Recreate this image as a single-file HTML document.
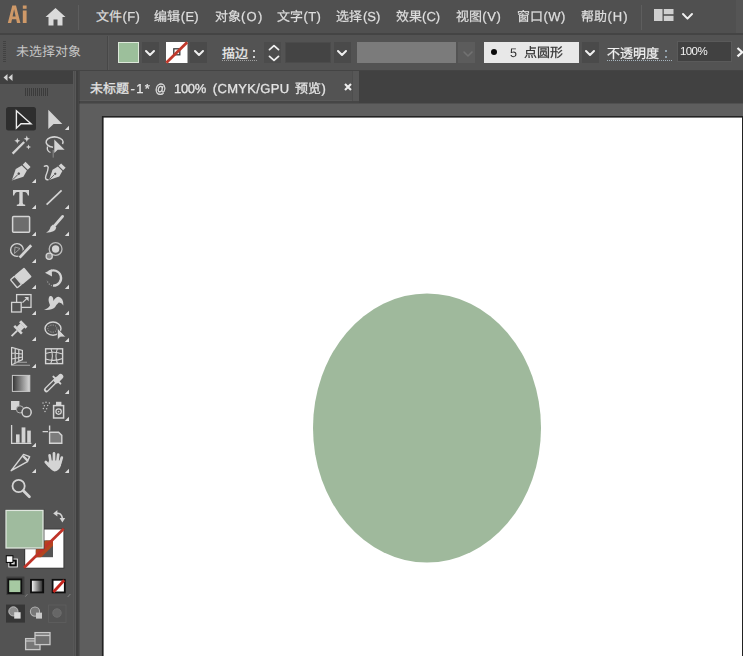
<!DOCTYPE html>
<html lang="zh-CN"><head><meta charset="utf-8"><title>Adobe Illustrator</title><style>
html,body{margin:0;padding:0}
body{width:743px;height:656px;overflow:hidden;position:relative;background:#535353;font-family:"Liberation Sans",sans-serif}
.abs{position:absolute}
.g{position:absolute;display:block;overflow:visible}
.tx{pointer-events:none;will-change:transform}
.tx text{font-family:"Liberation Sans",sans-serif;white-space:pre;text-rendering:geometricPrecision}
.cj text{font-family:"Liberation Sans","Noto Sans CJK SC",sans-serif;white-space:pre;text-rendering:geometricPrecision}
</style></head><body>
<div class="abs" style="left:0;top:0;width:743px;height:33px;background:#505050"></div>
<div class="abs" style="left:0;top:33px;width:743px;height:2px;background:#444444"></div>
<div class="abs" style="left:736px;top:0;width:7px;height:33px;background:#555555"></div>
<svg class="g" style="left:0;top:0" width="32" height="30" viewBox="0 0 32 30" role="img" aria-label="Ai"><title>Ai</title><path fill="#cf9968" fill-rule="evenodd" d="M7.8 23 L12.3 5.4 H16 L20.4 23 H17 L16.2 19.3 H12 L11.2 23 Z M12.6 16.5 H15.6 L14.1 9.3 Z M22.8 10.4 H26.6 V23 H22.8 Z M22.8 5.4 H26.6 V8.7 H22.8 Z"/></svg>
<svg class="g" style="left:45px;top:7px" width="22" height="20" viewBox="0 0 22 20"><path fill="#dadada" d="M10.5 1 L0.5 10 H3.5 V18.5 H8.5 V12.5 H12.5 V18.5 H17.5 V10 H20.5 Z"/></svg>
<div class="abs" style="left:78px;top:5px;width:1px;height:25px;background:#5e5e5e"></div>
<svg class="g cj" style="left:96px;top:6.95px" width="28.0" height="18.2" viewBox="0 -13.65 28.0 18.2"><text x="0" y="0" font-size="13" fill="#dedede" style="stroke:#dedede;stroke-width:0.25px">文件</text></svg>
<svg class="g tx" style="left:0;top:0" width="743" height="110"><text x="122.5" y="20.6" font-size="13" fill="#dedede" style="letter-spacing:0.35px;stroke:#dedede;stroke-width:0.25px">(F)</text></svg>
<svg class="g cj" style="left:154.3px;top:6.95px" width="28.0" height="18.2" viewBox="0 -13.65 28.0 18.2"><text x="0" y="0" font-size="13" fill="#dedede" style="stroke:#dedede;stroke-width:0.25px">编辑</text></svg>
<svg class="g tx" style="left:0;top:0" width="743" height="110"><text x="180.8" y="20.6" font-size="13" fill="#dedede" style="letter-spacing:0.25px;stroke:#dedede;stroke-width:0.25px">(E)</text></svg>
<svg class="g cj" style="left:214.6px;top:6.95px" width="28.0" height="18.2" viewBox="0 -13.65 28.0 18.2"><text x="0" y="0" font-size="13" fill="#dedede" style="stroke:#dedede;stroke-width:0.25px">对象</text></svg>
<svg class="g tx" style="left:0;top:0" width="743" height="110"><text x="241.1" y="20.6" font-size="13" fill="#dedede" style="letter-spacing:1.2px;stroke:#dedede;stroke-width:0.25px">(O)</text></svg>
<svg class="g cj" style="left:277px;top:6.95px" width="28.0" height="18.2" viewBox="0 -13.65 28.0 18.2"><text x="0" y="0" font-size="13" fill="#dedede" style="stroke:#dedede;stroke-width:0.25px">文字</text></svg>
<svg class="g tx" style="left:0;top:0" width="743" height="110"><text x="303.5" y="20.6" font-size="13" fill="#dedede" style="letter-spacing:0.35px;stroke:#dedede;stroke-width:0.25px">(T)</text></svg>
<svg class="g cj" style="left:336.4px;top:6.95px" width="28.0" height="18.2" viewBox="0 -13.65 28.0 18.2"><text x="0" y="0" font-size="13" fill="#dedede" style="stroke:#dedede;stroke-width:0.25px">选择</text></svg>
<svg class="g tx" style="left:0;top:0" width="743" height="110"><text x="362.9" y="20.6" font-size="13" fill="#dedede" style="letter-spacing:0px;stroke:#dedede;stroke-width:0.25px">(S)</text></svg>
<svg class="g cj" style="left:395.6px;top:6.95px" width="28.0" height="18.2" viewBox="0 -13.65 28.0 18.2"><text x="0" y="0" font-size="13" fill="#dedede" style="stroke:#dedede;stroke-width:0.25px">效果</text></svg>
<svg class="g tx" style="left:0;top:0" width="743" height="110"><text x="422.1" y="20.6" font-size="13" fill="#dedede" style="letter-spacing:0px;stroke:#dedede;stroke-width:0.25px">(C)</text></svg>
<svg class="g cj" style="left:455.7px;top:6.95px" width="28.0" height="18.2" viewBox="0 -13.65 28.0 18.2"><text x="0" y="0" font-size="13" fill="#dedede" style="stroke:#dedede;stroke-width:0.25px">视图</text></svg>
<svg class="g tx" style="left:0;top:0" width="743" height="110"><text x="482.2" y="20.6" font-size="13" fill="#dedede" style="letter-spacing:0.65px;stroke:#dedede;stroke-width:0.25px">(V)</text></svg>
<svg class="g cj" style="left:517px;top:6.95px" width="28.0" height="18.2" viewBox="0 -13.65 28.0 18.2"><text x="0" y="0" font-size="13" fill="#dedede" style="stroke:#dedede;stroke-width:0.25px">窗口</text></svg>
<svg class="g tx" style="left:0;top:0" width="743" height="110"><text x="543.5" y="20.6" font-size="13" fill="#dedede" style="letter-spacing:0.4px;stroke:#dedede;stroke-width:0.25px">(W)</text></svg>
<svg class="g cj" style="left:581px;top:6.95px" width="28.0" height="18.2" viewBox="0 -13.65 28.0 18.2"><text x="0" y="0" font-size="13" fill="#dedede" style="stroke:#dedede;stroke-width:0.25px">帮助</text></svg>
<svg class="g tx" style="left:0;top:0" width="743" height="110"><text x="607.5" y="20.6" font-size="13" fill="#dedede" style="letter-spacing:1.0px;stroke:#dedede;stroke-width:0.25px">(H)</text></svg>
<div class="abs" style="left:641px;top:5px;width:1px;height:25px;background:#5e5e5e"></div>
<svg class="g" style="left:654px;top:9px" width="20" height="12" viewBox="0 0 20 12"><g fill="#cfcfcf"><rect x="0" y="0" width="8.5" height="12"/><rect x="9.8" y="0" width="9.7" height="5.2"/><rect x="9.8" y="6.8" width="9.7" height="5.2"/></g></svg>
<svg class="g" style="left:682px;top:12.5px" width="11" height="6.6" viewBox="-1 -1 11 6.6"><path d="M0 0 L4.5 4.6 L9 0" fill="none" stroke="#efefef" stroke-width="2.0" stroke-linecap="round" stroke-linejoin="round"/></svg>
<div class="abs" style="left:0;top:35px;width:743px;height:35px;background:#535353"></div>
<div class="abs" style="left:0;top:70px;width:743px;height:1px;background:#444444"></div>
<div class="abs" style="left:107px;top:36px;width:1px;height:34px;background:#474747"></div><div class="abs" style="left:108px;top:36px;width:1px;height:34px;background:#5a5a5a"></div>
<div class="abs" style="left:3px;top:41px;width:3px;height:22px;background:repeating-linear-gradient(to bottom,#424242 0 1px,transparent 1px 2px)"></div>
<svg class="g cj" style="left:15.5px;top:42.35px" width="67.0" height="18.2" viewBox="0 -13.65 67.0 18.2"><text x="0" y="0" font-size="13" fill="#c6c6c6">未选择对象</text></svg>
<div class="abs" style="left:118px;top:42px;width:21px;height:21px;background:#9cbf9b;box-shadow:inset 0 0 0 1px #dde8da"></div>
<div class="abs" style="left:141.5px;top:42px;width:17px;height:21px;background:#4a4a4a"></div>
<svg class="g" style="left:145px;top:50.4px" width="10" height="6" viewBox="-1 -1 10 6"><path d="M0 0 L4.0 4 L8 0" fill="none" stroke="#efefef" stroke-width="2.0" stroke-linecap="round" stroke-linejoin="round"/></svg>
<svg class="g" style="left:166px;top:42px" width="21.5" height="21" viewBox="0 0 21.5 21"><rect width="21.5" height="21" fill="#fff"/><rect x="7.8" y="6.8" width="6" height="6" fill="none" stroke="#3a3a3a" stroke-width="1.3"/><path d="M0.3 20.7 L21.2 0.3" stroke="#c0392b" stroke-width="2.8"/></svg>
<div class="abs" style="left:190px;top:42px;width:17px;height:21px;background:#4a4a4a"></div>
<svg class="g" style="left:194px;top:50.4px" width="10" height="6" viewBox="-1 -1 10 6"><path d="M0 0 L4.0 4 L8 0" fill="none" stroke="#efefef" stroke-width="2.0" stroke-linecap="round" stroke-linejoin="round"/></svg>
<svg class="g cj" style="left:221.5px;top:43.85px" width="28.0" height="18.2" viewBox="0 -13.65 28.0 18.2"><text x="0" y="0" font-size="13" fill="#ececec" style="stroke:#ececec;stroke-width:0.25px">描边</text></svg>
<div class="abs" style="left:252.5px;top:50px;width:2px;height:2px;background:#d0d0d0"></div><div class="abs" style="left:252.5px;top:55.5px;width:2px;height:2px;background:#d0d0d0"></div>
<div class="abs" style="left:222px;top:60px;width:36px;height:1px;background:repeating-linear-gradient(to right,#a0a0a0 0 1px,transparent 1px 2px)"></div>
<div class="abs" style="left:263.5px;top:42px;width:17px;height:21px;background:#4c4c4c"></div>
<svg class="g" style="left:267.5px;top:43px" width="12" height="20" viewBox="0 0 12 20"><path d="M1.5 6.6 L6 2.6 L10.5 6.6 M1.5 13.4 L6 17.4 L10.5 13.4" fill="none" stroke="#eeeeee" stroke-width="1.8" stroke-linecap="round" stroke-linejoin="round"/></svg>
<div class="abs" style="left:284.5px;top:42px;width:46.5px;height:21px;background:#444444;box-shadow:inset 0 0 0 1px #4b4b4b"></div>
<div class="abs" style="left:333.5px;top:42px;width:17px;height:21px;background:#4a4a4a"></div>
<svg class="g" style="left:336.5px;top:50.4px" width="10" height="6" viewBox="-1 -1 10 6"><path d="M0 0 L4.0 4 L8 0" fill="none" stroke="#efefef" stroke-width="2.0" stroke-linecap="round" stroke-linejoin="round"/></svg>
<div class="abs" style="left:357px;top:42px;width:99px;height:21px;background:#7b7b7b"></div>
<div class="abs" style="left:457.5px;top:42px;width:17px;height:21px;background:#5c5c5c"></div>
<svg class="g" style="left:462.5px;top:50.6px" width="10" height="6" viewBox="-1 -1 10 6"><path d="M0 0 L4.0 4 L8 0" fill="none" stroke="#727272" stroke-width="1.6" stroke-linecap="round" stroke-linejoin="round"/></svg>
<div class="abs" style="left:483.5px;top:42px;width:95.5px;height:21px;background:#e8e8e8"></div>
<div class="abs" style="left:491px;top:49px;width:6px;height:6px;border-radius:50%;background:#0a0a0a"></div>
<svg class="g tx" style="left:0;top:0" width="743" height="110"><text x="510" y="56.6" font-size="12.5" fill="#2e2e2e" style="">5</text></svg>
<svg class="g cj" style="left:524px;top:43.35px" width="41.4" height="18.2" viewBox="0 -13.65 41.4 18.2"><text x="0" y="0" font-size="13" fill="#333333" style="stroke:#333333;stroke-width:0.25px">点圆形</text></svg>
<div class="abs" style="left:582px;top:42px;width:17px;height:21px;background:#4a4a4a"></div>
<svg class="g" style="left:585px;top:50.4px" width="10" height="6" viewBox="-1 -1 10 6"><path d="M0 0 L4.0 4 L8 0" fill="none" stroke="#efefef" stroke-width="2.0" stroke-linecap="round" stroke-linejoin="round"/></svg>
<svg class="g cj" style="left:607px;top:43.85px" width="54.0" height="18.2" viewBox="0 -13.65 54.0 18.2"><text x="0" y="0" font-size="13" fill="#f2f2f2" style="stroke:#f2f2f2;stroke-width:0.25px">不透明度</text></svg>
<div class="abs" style="left:664.5px;top:50px;width:2px;height:2px;background:#93a2ad"></div><div class="abs" style="left:664.5px;top:55.5px;width:2px;height:2px;background:#93a2ad"></div>
<div class="abs" style="left:607px;top:60px;width:65px;height:1px;background:repeating-linear-gradient(to right,#a5b3bc 0 1px,transparent 1px 2px)"></div>
<div class="abs" style="left:677px;top:41px;width:54.5px;height:21px;background:#414141;box-shadow:inset 0 0 0 1px #5a5a5a"></div>
<svg class="g tx" style="left:0;top:0" width="743" height="110"><text x="680" y="55" font-size="11.5" fill="#f2f2f2" style="letter-spacing:-0.6px">100%</text></svg>
<svg class="g" style="left:736px;top:47px" width="8" height="11" viewBox="0 0 8 11"><path d="M1.5 1 L6.2 5.2 L1.5 9.4" fill="none" stroke="#f4f4f4" stroke-width="2.2"/></svg>
<div class="abs" style="left:79px;top:71px;width:664px;height:32px;background:#414141"></div>
<div class="abs" style="left:79px;top:103px;width:664px;height:1px;background:#505050"></div>
<div class="abs" style="left:79px;top:71px;width:280px;height:30px;background:#535353"></div>
<div class="abs" style="left:79px;top:100px;width:280px;height:1px;background:#595959"></div>
<div class="abs" style="left:79px;top:101px;width:280px;height:2px;background:#464646"></div>
<div class="abs" style="left:352px;top:71px;width:7px;height:30px;background:#575757"></div><div class="abs" style="left:352px;top:71px;width:1px;height:30px;background:#4e4e4e"></div>
<svg class="g cj" style="left:90px;top:78.95px" width="41.0" height="18.2" viewBox="0 -13.65 41.0 18.2"><text x="0" y="0" font-size="13" fill="#e4e4e4" style="stroke:#e4e4e4;stroke-width:0.3px">未标题</text></svg>
<svg class="g tx" style="left:0;top:0" width="743" height="110"><text x="130.5" y="92.6" font-size="13" fill="#e4e4e4" style="stroke:#e4e4e4;stroke-width:0.3px;letter-spacing:1.3px">-1*</text></svg>
<svg class="g tx" style="left:0;top:0" width="743" height="110"><text transform="translate(155 92.6) scale(0.84 1)" font-size="13" fill="#e4e4e4" style="stroke:#e4e4e4;stroke-width:0.3px;">@</text></svg>
<svg class="g tx" style="left:0;top:0" width="743" height="110"><text x="174" y="92.6" font-size="13" fill="#e4e4e4" style="stroke:#e4e4e4;stroke-width:0.3px;letter-spacing:-0.3px">100%</text></svg>
<svg class="g tx" style="left:0;top:0" width="743" height="110"><text x="212.8" y="92.6" font-size="13" fill="#e4e4e4" style="stroke:#e4e4e4;stroke-width:0.3px;letter-spacing:0.33px">(CMYK/GPU</text></svg>
<svg class="g cj" style="left:294.5px;top:78.95px" width="28.0" height="18.2" viewBox="0 -13.65 28.0 18.2"><text x="0" y="0" font-size="13" fill="#e4e4e4" style="stroke:#e4e4e4;stroke-width:0.3px">预览</text></svg>
<svg class="g tx" style="left:0;top:0" width="743" height="110"><text x="321.5" y="92.6" font-size="13" fill="#e4e4e4" style="stroke:#e4e4e4;stroke-width:0.3px;">)</text></svg>
<svg class="g" style="left:343.5px;top:82.5px" width="8" height="8" viewBox="0 0 8 8"><path d="M1 1 L7 7 M7 1 L1 7" stroke="#ececec" stroke-width="2.1"/></svg>
<div class="abs" style="left:79px;top:104px;width:664px;height:552px;background:#5e5e5e"></div>
<svg class="g" style="left:100px;top:114px" width="643" height="542" viewBox="100 114 643 542"><rect x="101.9" y="116" width="641.1" height="545" fill="#222222"/><rect x="103.6" y="117.6" width="638.4" height="545" fill="#ffffff"/></svg>
<svg class="g" style="left:300px;top:280px" width="260" height="300" viewBox="300 280 260 300"><ellipse cx="427" cy="428" rx="114" ry="134.5" fill="#9fb99c"/></svg>
<div class="abs" style="left:0;top:71px;width:73px;height:585px;background:#535353"></div>
<div class="abs" style="left:0;top:71px;width:73px;height:13px;background:#404040"></div>
<div class="abs" style="left:73px;top:71px;width:3px;height:585px;background:#585858"></div>
<div class="abs" style="left:74px;top:71px;width:1px;height:585px;background:#4f4f4f"></div>
<div class="abs" style="left:76px;top:71px;width:3px;height:585px;background:#404040"></div>
<div class="abs" style="left:78px;top:71px;width:1px;height:585px;background:#454545"></div>
<div class="abs" style="left:79px;top:71px;width:1px;height:585px;background:rgba(0,0,0,0.14)"></div>
<svg class="g" style="left:3px;top:74px" width="10" height="7" viewBox="0 0 10 7"><path d="M4.5 0 V7 L0.5 3.5 Z M9.5 0 V7 L5.5 3.5 Z" fill="#d4d4d4"/></svg>
<div class="abs" style="left:25px;top:88px;width:23px;height:8px;background:repeating-linear-gradient(to right,#3b3b3b 0 1px,transparent 1px 2px)"></div>
<svg class="g" style="left:0;top:100px" width="74" height="556" viewBox="0 100 74 556"><rect x="6" y="107" width="30" height="23.5" rx="2.5" fill="#2e2e2e"/>
<path d="M16.4 110.8 V128.2 L21 123.8 H31 Z" fill="#262626" stroke="#ececec" stroke-width="1.4" stroke-linejoin="miter"/>
<path d="M48.3 109.8 V129 L53.6 124 H62.3 Z" fill="#d4d4d4"/>
<path d="M69 125.8 V130 H64.8 Z" fill="#dcdcdc"/>
<path d="M12.6 153.6 L24.2 142" stroke="#d4d4d4" stroke-width="2.3" stroke-linecap="butt"/>
<path d="M17.3 137.8 L18.14 139.96 L20.3 140.8 L18.14 141.64000000000001 L17.3 143.8 L16.46 141.64000000000001 L14.3 140.8 L16.46 139.96 Z" fill="#d4d4d4"/>
<path d="M26.8 135.60000000000002 L27.696 137.90400000000002 L30.0 138.8 L27.696 139.696 L26.8 142.0 L25.904 139.696 L23.6 138.8 L25.904 137.90400000000002 Z" fill="#d4d4d4"/>
<path d="M28.5 144.4 L29.228 146.272 L31.1 147 L29.228 147.728 L28.5 149.6 L27.772 147.728 L25.9 147 L27.772 146.272 Z" fill="#d4d4d4"/>
<path d="M53 147.2 A8.5 5.2 0 1 1 62.5 144" fill="none" stroke="#d4d4d4" stroke-width="1.5"/>
<path d="M47.5 146.5 Q46.5 151 50.5 152.5" fill="none" stroke="#d4d4d4" stroke-width="1.3"/>
<path d="M54.3 139.6 V153 L57.7 149.8 H64.6 Z" fill="#d4d4d4"/>
<path d="M53.2 150 V157.6" stroke="#8c8c8c" stroke-width="1"/>
<g transform="translate(19.2 173.2) rotate(45) scale(1.0)"><rect x="-3.6" y="-12.5" width="7.2" height="4" fill="#d4d4d4"/><path d="M-3.6 -7.3 H3.6 L5.4 -0.5 L0 10.5 L-5.4 -0.5 Z" fill="#d4d4d4"/><path d="M0 10 V2" stroke="#535353" stroke-width="0.9"/><circle cx="0" cy="0.6" r="1.3" fill="#535353"/></g>
<path d="M36 178.8 V183 H31.8 Z" fill="#dcdcdc"/>
<g transform="translate(55.6 173.4) rotate(45) scale(0.88)"><rect x="-3.6" y="-12.5" width="7.2" height="4" fill="#d4d4d4"/><path d="M-3.6 -7.3 H3.6 L5.4 -0.5 L0 10.5 L-5.4 -0.5 Z" fill="#d4d4d4"/><path d="M0 10 V2" stroke="#535353" stroke-width="0.9"/><circle cx="0" cy="0.6" r="1.3" fill="#535353"/></g>
<path d="M43.8 166.5 Q47.5 164.5 48.2 167.5 Q48 171 45.8 176 Q44.6 180.3 48.6 179.6" fill="none" stroke="#d4d4d4" stroke-width="1.4"/>
<path d="M13 190 H29 V195.6 H27.9 Q27.2 192.3 24.6 192 H22.7 V203 Q22.7 204.6 25.2 204.8 V206 H16.8 V204.8 Q19.3 204.6 19.3 203 V192 H17.4 Q14.8 192.3 14.1 195.6 H13 Z" fill="#d4d4d4"/>
<path d="M36 204.8 V209 H31.8 Z" fill="#dcdcdc"/>
<path d="M46.6 204.6 L61.6 190.4" stroke="#d4d4d4" stroke-width="1.7"/>
<path d="M69 204.8 V209 H64.8 Z" fill="#dcdcdc"/>
<rect x="12.6" y="216.6" width="17" height="15.6" rx="1" fill="#6d6d6d" stroke="#d4d4d4" stroke-width="1.5"/>
<path d="M36 231.8 V236 H31.8 Z" fill="#dcdcdc"/>
<path d="M62.6 216.4 L54.6 225.6" stroke="#d4d4d4" stroke-width="2.8" stroke-linecap="round"/>
<path d="M53 224.6 L56.3 227.6 Q55.5 232.4 46 232.8 Q49.8 230.6 50.6 226.8 Z" fill="#d4d4d4"/>
<path d="M69 231.8 V236 H64.8 Z" fill="#dcdcdc"/>
<circle cx="17" cy="250" r="6.4" fill="none" stroke="#d4d4d4" stroke-width="1.4"/>
<path d="M14.5 253.5 L15 247 L20 248.5 Z" fill="none" stroke="#a8a8a8" stroke-width="0.9"/>
<path d="M19.6 257.6 L31.2 245.2" stroke="#535353" stroke-width="5"/>
<path d="M19.6 257.6 L31.2 245.2" stroke="#d4d4d4" stroke-width="2.8"/>
<path d="M36 258.8 V263 H31.8 Z" fill="#dcdcdc"/>
<circle cx="55.6" cy="249" r="6.4" fill="none" stroke="#bdbdbd" stroke-width="1.3"/>
<circle cx="55.6" cy="249" r="3.7" fill="#d4d4d4"/>
<circle cx="49.2" cy="256.3" r="3.1" fill="#8a8a8a" stroke="#d4d4d4" stroke-width="1.3"/>
<g transform="translate(21 277.8) rotate(-40)"><rect x="-3.5" y="-6" width="12.5" height="12" rx="0.8" fill="#d4d4d4"/><rect x="-9.3" y="-5.3" width="5.6" height="10.6" rx="0.8" fill="none" stroke="#d4d4d4" stroke-width="1.4"/></g>
<path d="M36 284.8 V289 H31.8 Z" fill="#dcdcdc"/>
<path d="M48.8 272 A7.6 7.6 0 1 1 53 285.6" fill="none" stroke="#d4d4d4" stroke-width="2.3"/>
<path d="M45 272.8 L51.8 269.2 L52 276.4 Z" fill="#d4d4d4"/>
<path d="M52 285.8 A7.6 7.6 0 0 1 47 280" fill="none" stroke="#9c9c9c" stroke-width="1.2" stroke-dasharray="1.2 1.4"/>
<path d="M69 284.8 V289 H64.8 Z" fill="#dcdcdc"/>
<rect x="16.6" y="294.6" width="14.4" height="12.8" fill="none" stroke="#d4d4d4" stroke-width="1.3"/>
<rect x="11.6" y="302.4" width="9.6" height="9.6" fill="#535353" stroke="#d4d4d4" stroke-width="1.3"/>
<path d="M22.5 302.6 L27.8 297.6" stroke="#d4d4d4" stroke-width="1.3"/><path d="M24.4 297 H28.6 V301.2 Z" fill="#d4d4d4"/>
<path d="M36 310.8 V315 H31.8 Z" fill="#dcdcdc"/>
<path d="M44 309.8 Q48.6 308.6 50 305.2 Q47.2 299.4 49.8 296 Q53.4 295.4 53.4 301 Q55.4 297 58.6 296.8 Q63.6 298 63.4 305.6 Q61.4 302.2 58.8 302.4 Q56.6 304.2 55 307.2 Q51.2 310.6 44 309.8 Z" fill="#d4d4d4"/>
<path d="M69 310.8 V315 H64.8 Z" fill="#dcdcdc"/>
<g transform="translate(18.2 329.6) rotate(45) scale(0.9)"><rect x="-5" y="-9.6" width="10" height="3.2" fill="#d4d4d4"/><rect x="-3.2" y="-6.6" width="6.4" height="5.8" fill="#d4d4d4"/><rect x="-6" y="-1.2" width="12" height="2.8" fill="#d4d4d4"/><path d="M0 1.6 V10.4" stroke="#d4d4d4" stroke-width="2"/></g>
<path d="M36 336.8 V341 H31.8 Z" fill="#dcdcdc"/>
<ellipse cx="53" cy="328.6" rx="8" ry="6.6" fill="none" stroke="#d4d4d4" stroke-width="1.4"/>
<ellipse cx="52.4" cy="328.6" rx="4.6" ry="3.6" fill="none" stroke="#a4a4a4" stroke-width="1" stroke-dasharray="1.2 1.2"/>
<path d="M57.4 328 V340 L60.4 337 H65.8 Z" fill="#d4d4d4" stroke="#535353" stroke-width="0.8"/>
<path d="M69 337.8 V342 H64.8 Z" fill="#dcdcdc"/>
<path d="M11.6 347 V365.4 M11.6 347.4 L22.4 350.4 V359.6 L11.6 365 M15.2 348.4 V363 M18.8 349.4 V361.2 M11.6 353 L22.4 354 M11.6 359 L22.4 357" fill="none" stroke="#d4d4d4" stroke-width="1.2"/>
<path d="M14 362.2 H27 M12 365.2 H30" fill="none" stroke="#a8a8a8" stroke-width="1.1"/>
<path d="M36 363.8 V368 H31.8 Z" fill="#dcdcdc"/>
<rect x="45.6" y="348.8" width="17" height="14.8" fill="none" stroke="#d4d4d4" stroke-width="1.4"/>
<path d="M51 348.6 Q54 356 50.6 364 M57.4 348.6 Q54.4 356 57.6 364 M45.6 353.6 Q54 350.8 62.6 354 M45.6 359 Q54 362 62.6 358.6" fill="none" stroke="#d4d4d4" stroke-width="1.1"/>
<defs><linearGradient id="gr1" x1="0" x2="1" y1="0" y2="0"><stop offset="0" stop-color="#333"/><stop offset="1" stop-color="#d8d8d8"/></linearGradient><linearGradient id="gr2" x1="0" x2="1" y1="0" y2="0"><stop offset="0" stop-color="#fff"/><stop offset="1" stop-color="#222"/></linearGradient></defs>
<rect x="12.4" y="375.4" width="17.4" height="16" fill="url(#gr1)" stroke="#c8c8c8" stroke-width="1"/>
<path d="M46.4 389.8 L56.8 379.4" stroke="#d4d4d4" stroke-width="5" stroke-linecap="round"/><path d="M46.8 389.4 L56.4 379.8" stroke="#535353" stroke-width="2.2" stroke-linecap="round"/>
<path d="M56.6 380.6 L60.6 376.6" stroke="#d4d4d4" stroke-width="5.4" stroke-linecap="round"/>
<path d="M53.4 376.6 L60.4 383.6" stroke="#d4d4d4" stroke-width="2" stroke-linecap="round"/>
<path d="M69 389.8 V394 H64.8 Z" fill="#dcdcdc"/>
<rect x="11" y="401" width="8.4" height="9" fill="#d4d4d4"/>
<circle cx="20" cy="409.4" r="3.6" fill="#535353" stroke="#b4b4b4" stroke-width="1"/>
<circle cx="26.6" cy="412.2" r="4.6" fill="#535353" stroke="#d4d4d4" stroke-width="1.5"/>
<rect x="53.6" y="405.6" width="10" height="12.4" fill="none" stroke="#d4d4d4" stroke-width="1.5"/>
<rect x="56" y="401.8" width="5.4" height="3.4" fill="#d4d4d4"/>
<circle cx="58.6" cy="411.6" r="2.7" fill="none" stroke="#d4d4d4" stroke-width="1.2"/><circle cx="58.6" cy="411.6" r="0.9" fill="#d4d4d4"/>
<circle cx="43" cy="403" r="0.75" fill="#c4c4c4"/>
<circle cx="46" cy="402.2" r="0.75" fill="#c4c4c4"/>
<circle cx="49.4" cy="403" r="0.75" fill="#c4c4c4"/>
<circle cx="44.4" cy="405.8" r="0.75" fill="#c4c4c4"/>
<circle cx="47.6" cy="405.6" r="0.75" fill="#c4c4c4"/>
<circle cx="43.4" cy="408.6" r="0.75" fill="#c4c4c4"/>
<circle cx="46.6" cy="408.8" r="0.75" fill="#c4c4c4"/>
<circle cx="45" cy="411.6" r="0.75" fill="#c4c4c4"/>
<path d="M69 416.8 V421 H64.8 Z" fill="#dcdcdc"/>
<path d="M11.6 425 V443.4 H31.4" fill="none" stroke="#d4d4d4" stroke-width="1.3"/>
<rect x="16" y="434.4" width="3.6" height="8.4" fill="#d4d4d4"/><rect x="21.6" y="427.4" width="3.8" height="15.4" fill="#d4d4d4"/><rect x="27.2" y="430.6" width="3.6" height="12.2" fill="#d4d4d4"/>
<path d="M36 442.8 V447 H31.8 Z" fill="#dcdcdc"/>
<path d="M42.6 431.6 H48 M49.6 425.4 V430.4" stroke="#d4d4d4" stroke-width="1.4"/>
<path d="M49.6 432.2 H58.6 L61.8 435.4 V443.2 H49.6 Z" fill="#7c7c7c" stroke="#d4d4d4" stroke-width="1.4"/>
<path d="M11.2 470.6 L23.6 454.4 L29.6 456.6 L27.4 461.6 Z" fill="none" stroke="#d4d4d4" stroke-width="1.5" stroke-linejoin="round"/><path d="M23 456 L27.6 460.6" stroke="#d4d4d4" stroke-width="2.4"/>
<path d="M36 468.8 V473 H31.8 Z" fill="#dcdcdc"/>
<g stroke="#d4d4d4" stroke-width="2.7" stroke-linecap="round" fill="none"><path d="M50.6 462 L49.6 455.4"/><path d="M54 461 V453.4"/><path d="M57.4 461.4 L58.2 454.6"/><path d="M60.2 463 L61.8 457.6"/><path d="M49.4 466 L45.8 462"/></g>
<path d="M49 460.6 H61.4 L61 465.6 Q59 471.4 54.4 471.4 Q50.4 470.6 47.6 464.6 Z" fill="#d4d4d4"/>
<path d="M69 468.8 V473 H64.8 Z" fill="#dcdcdc"/>
<circle cx="18.6" cy="486" r="6.1" fill="none" stroke="#d4d4d4" stroke-width="1.8"/><path d="M23.4 490.8 L29.4 496.8" stroke="#d4d4d4" stroke-width="2.8" stroke-linecap="round"/>
<rect x="24.2" y="528.6" width="40.2" height="40" fill="#3a3a3a"/>
<rect x="25.2" y="529.5" width="38.2" height="38.2" fill="#ffffff"/>
<rect x="35.8" y="540.4" width="17.2" height="16.8" fill="#555555"/>
<clipPath id="isq"><rect x="35.8" y="540.4" width="17.2" height="16.8"/></clipPath>
<path d="M24 567.8 L64 528.6" stroke="#b3451f" stroke-width="9" clip-path="url(#isq)"/>
<path d="M24 567.8 L63.8 528.8" stroke="#bf3328" stroke-width="2.7"/>
<rect x="4.8" y="509.2" width="39.6" height="40" fill="#404040"/>
<rect x="6" y="510.4" width="37" height="37.6" fill="#9fbb9e" stroke="#dfe6de" stroke-width="1.3"/>
<path d="M56 513.4 Q61.6 512.4 62.4 518.4" fill="none" stroke="#d4d4d4" stroke-width="1.6"/><path d="M59.6 518 H65.2 L62.4 522.4 Z" fill="#d4d4d4"/><path d="M57.4 510 V516.6 L53.2 513.4 Z" fill="#d4d4d4"/>
<rect x="8.4" y="558.6" width="9.4" height="8.8" fill="#f4f4f4"/><rect x="9.3" y="559.5" width="7.5" height="7" fill="#0c0c0c"/><rect x="11.4" y="561.6" width="3.3" height="2.8" fill="#e0e0e0"/>
<rect x="5.8" y="555.2" width="7.6" height="7.8" fill="#0c0c0c"/><rect x="6.8" y="556.3" width="5.6" height="5.6" fill="#ffffff"/>
<rect x="6.4" y="576.6" width="18" height="18.4" fill="#3e3e3e"/>
<rect x="8.3" y="579.4" width="13" height="13.6" fill="#a6c9a2" stroke="#0e0e0e" stroke-width="1.8"/>
<path d="M25.4 596.6 L27.4 594.2 M67.6 597 L70.4 594" stroke="#8a8a8a" stroke-width="0.9"/>
<rect x="31" y="579.8" width="12.2" height="12.6" fill="url(#gr2)" stroke="#0e0e0e" stroke-width="1.8"/>
<rect x="52.6" y="579.8" width="12.2" height="12.6" fill="#ffffff" stroke="#0e0e0e" stroke-width="1.8"/><path d="M53.4 592 L64.2 580.2" stroke="#c4241c" stroke-width="2.8"/>
<rect x="6" y="604.6" width="19" height="18" fill="#363636"/>
<circle cx="13.4" cy="611.4" r="4.6" fill="#8e8e8e" stroke="#bdbdbd" stroke-width="1"/><rect x="14.2" y="612.2" width="6.4" height="6.4" fill="#dcdcdc"/>
<circle cx="35" cy="611.6" r="4.6" fill="#777" stroke="#b4b4b4" stroke-width="1.1"/><rect x="36" y="612.6" width="6" height="6" fill="#c8c8c8"/>
<rect x="48.6" y="605" width="17.4" height="17.4" fill="none" stroke="#5f5f5f" stroke-width="0.8"/><circle cx="57" cy="613" r="4.2" fill="#666" stroke="#6e6e6e" stroke-width="1"/>
<rect x="25.6" y="638.6" width="14.4" height="11" fill="#777" stroke="#c8c8c8" stroke-width="1.3"/><path d="M25.6 641 H40" stroke="#c8c8c8" stroke-width="1.2"/>
<rect x="35" y="632.6" width="15" height="12" fill="#707070" stroke="#c8c8c8" stroke-width="1.3"/><path d="M35 635.4 H50" stroke="#c8c8c8" stroke-width="1.4"/></svg>
</body></html>
